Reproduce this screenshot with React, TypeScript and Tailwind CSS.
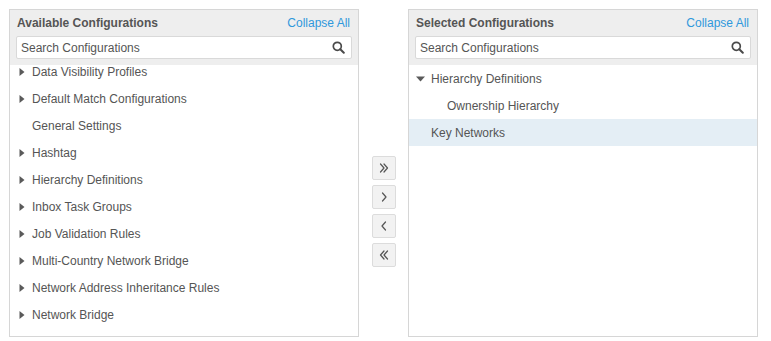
import React from "react";

type Item = { label: string; caret?: "right" | "down" | null; level?: number; selected?: boolean };

const leftItems: Item[] = [
  { label: "Data Visibility Profiles", caret: "right" },
  { label: "Default Match Configurations", caret: "right" },
  { label: "General Settings", caret: null },
  { label: "Hashtag", caret: "right" },
  { label: "Hierarchy Definitions", caret: "right" },
  { label: "Inbox Task Groups", caret: "right" },
  { label: "Job Validation Rules", caret: "right" },
  { label: "Multi-Country Network Bridge", caret: "right" },
  { label: "Network Address Inheritance Rules", caret: "right" },
  { label: "Network Bridge", caret: "right" },
];

const rightItems: Item[] = [
  { label: "Hierarchy Definitions", caret: "down" },
  { label: "Ownership Hierarchy", caret: null, level: 1 },
  { label: "Key Networks", caret: null, selected: true },
];

function Caret({ dir }: { dir: "right" | "down" }) {
  if (dir === "right") {
    return (
      <svg width="6" height="9" viewBox="0 0 6 9" className="block">
        <path d="M0.5 0.5 L5.5 4.5 L0.5 8.5 Z" fill="#5a5a5a" />
      </svg>
    );
  }
  return (
    <svg width="9" height="6" viewBox="0 0 9 6" className="block">
      <path d="M0 0.5 L9 0.5 L4.5 5.5 Z" fill="#5a5a5a" />
    </svg>
  );
}

function SearchIcon() {
  return (
    <svg width="13" height="13" viewBox="0 0 13 13" className="block">
      <circle cx="5.3" cy="5.3" r="4" fill="none" stroke="#4a4a4a" strokeWidth="1.7" />
      <path d="M8.3 8.3 L11.8 11.8" stroke="#4a4a4a" strokeWidth="2" strokeLinecap="round" />
    </svg>
  );
}

function Row({ item }: { item: Item }) {
  const indent = item.level === 1 ? "pl-[38px]" : "pl-[22px]";
  return (
    <div
      className={`relative h-[27px] flex items-center ${indent} ${item.selected ? "bg-[#e4eef5]" : ""}`}
    >
      {item.caret && (
        <span className={`absolute top-1/2 -translate-y-1/2 ${item.caret === "down" ? "left-[7px]" : "left-[9px]"}`}>
          <Caret dir={item.caret} />
        </span>
      )}
      <span className="text-[12px] text-[#555555] whitespace-nowrap">{item.label}</span>
    </div>
  );
}

function Panel({ title, items, offset }: { title: string; items: Item[]; offset?: boolean }) {
  return (
    <div className="w-[350px] h-[328px] border border-[#d6d6d6] bg-white flex flex-col">
      <div className="bg-[#eeeeee] px-[6px] pb-[6px]">
        <div className="h-[25px] flex items-center justify-between pl-[1px] pr-[2px]">
          <span className="text-[12px] font-bold text-[#555555]">{title}</span>
          <span className="text-[12px] text-[#2e98dc]">Collapse All</span>
        </div>
        <div className="mt-[1px] h-[23px] bg-white border border-[#d9d9d9] rounded-[2px] flex items-center justify-between pl-[4px] pr-[6px]">
          <span className="text-[12px] text-[#555555]">Search Configurations</span>
          <SearchIcon />
        </div>
      </div>
      <div className="flex-1 overflow-hidden">
        <div className={offset ? "-mt-[7px]" : ""}>
          {items.map((it, i) => (
            <Row key={i} item={it} />
          ))}
        </div>
      </div>
    </div>
  );
}

function Chev({ kind }: { kind: "rr" | "r" | "l" | "ll" }) {
  const s = { stroke: "#555555", strokeWidth: 1.2, fill: "none", strokeLinecap: "round" as const, strokeLinejoin: "round" as const };
  return (
    <svg width="12" height="12" viewBox="0 0 12 12" className="block">
      {kind === "rr" && (
        <>
          <path d="M2.5 2 L6 6 L2.5 10" {...s} />
          <path d="M6 2 L9.5 6 L6 10" {...s} />
        </>
      )}
      {kind === "r" && <path d="M4.5 2 L8 6 L4.5 10" {...s} />}
      {kind === "l" && <path d="M7.5 2 L4 6 L7.5 10" {...s} />}
      {kind === "ll" && (
        <>
          <path d="M6 2 L2.5 6 L6 10" {...s} />
          <path d="M9.5 2 L6 6 L9.5 10" {...s} />
        </>
      )}
    </svg>
  );
}

function Btn({ kind }: { kind: "rr" | "r" | "l" | "ll" }) {
  return (
    <div className="w-[24px] h-[24px] bg-[#f2f2f2] border border-[#dcdcdc] rounded-[2px] flex items-center justify-center">
      <Chev kind={kind} />
    </div>
  );
}

export default function App() {
  return (
    <div
      className="w-[771px] h-[341px] bg-white pl-[9px] pt-[9px] flex"
      style={{ fontFamily: '"Liberation Sans", Arial, Helvetica, sans-serif' }}
    >
      <Panel title="Available Configurations" items={leftItems} offset />
      <div className="w-[49px] flex flex-col items-center gap-[5px] pt-[147px]">
        <Btn kind="rr" />
        <Btn kind="r" />
        <Btn kind="l" />
        <Btn kind="ll" />
      </div>
      <Panel title="Selected Configurations" items={rightItems} />
    </div>
  );
}
